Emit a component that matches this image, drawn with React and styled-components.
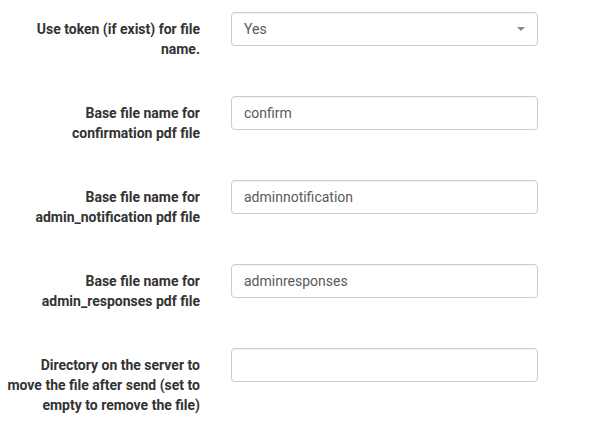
import React from "react";
import styled, { createGlobalStyle } from "styled-components";

const Global = createGlobalStyle`
  html, body { margin: 0; padding: 0; background: #fff; }
  body { font-family: Roboto, "Noto Sans", sans-serif; }
`;

const Form = styled.div`
  display: flex;
  flex-direction: column;
  padding-top: 12px;
`;

const Row = styled.div`
  display: grid;
  grid-template-columns: 200px 307px;
  column-gap: 31px;
  align-items: start;
  height: 84px;
`;

const Label = styled.label`
  padding: 7px 0 0 5px;
  text-align: right;
  font-weight: 700;
  font-size: 14px;
  line-height: 20px;
  color: #333;
`;

const Control = styled.div`
  position: relative;
  box-sizing: border-box;
  height: 34px;
  border: 1px solid #ccc;
  border-radius: 4px;
  background: #fff;
  padding: 0 12px;
  display: flex;
  align-items: center;
  font-size: 14px;
  color: #5a5a5a;
  box-shadow: inset 0 1px 1px rgba(0,0,0,0.04);
`;

const Caret = styled.span`
  position: absolute;
  right: 12px;
  top: 50%;
  margin-top: -2px;
  width: 0;
  height: 0;
  border-left: 4px solid transparent;
  border-right: 4px solid transparent;
  border-top: 4px solid #888;
`;

const rows = [
  { label: "Use token (if exist) for file name.", value: "Yes", select: true },
  { label: "Base file name for confirmation pdf file", value: "confirm" },
  { label: "Base file name for admin_notification pdf file", value: "adminnotification" },
  { label: "Base file name for admin_responses pdf file", value: "adminresponses" },
  { label: "Directory on the server to move the file after send (set to empty to remove the file)", value: "" },
];

export default function App() {
  return (
    <>
      <Global />
      <Form>
        {rows.map((r, i) => (
          <Row key={i}>
            <Label>{r.label}</Label>
            <Control>
              {r.value}
              {r.select && <Caret />}
            </Control>
          </Row>
        ))}
      </Form>
    </>
  );
}
